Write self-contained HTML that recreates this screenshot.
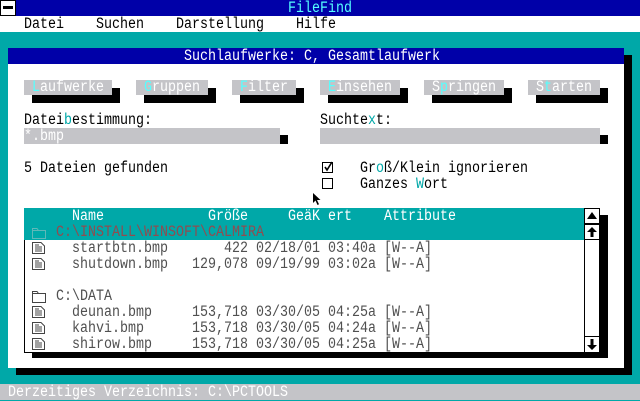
<!DOCTYPE html>
<html><head><meta charset="utf-8"><style>
*{margin:0;padding:0;box-sizing:border-box}
body{width:640px;height:400px;background:#00a8a8;position:relative;overflow:hidden;font-family:"Liberation Mono",monospace;font-size:15.5px;line-height:16px}
.a{position:absolute;white-space:pre;height:16px;transform-origin:0 0;transform:scaleX(0.86)}
.b{position:absolute}
.t{color:#00a8a8}
.c{color:#55ffff}
.k{color:#000}
.g{color:#505050}
</style></head><body>
<div class="b" style="left:0;top:0;width:640px;height:16px;background:#0000a8"></div>
<div class="b" style="left:0;top:0;width:16px;height:16px;background:#fff;border:1px solid #000"></div>
<div class="b" style="left:3px;top:6px;width:10px;height:3px;background:#000"></div>
<div class="a c" style="left:288px;top:0">FileFind</div>
<div class="b" style="left:0;top:16px;width:640px;height:16px;background:#fff"></div>
<div class="a k" style="left:24px;top:16px">Datei</div>
<div class="a k" style="left:96px;top:16px">Suchen</div>
<div class="a k" style="left:176px;top:16px">Darstellung</div>
<div class="a k" style="left:296px;top:16px">Hilfe</div>
<div class="b" style="left:16px;top:55px;width:616px;height:320px;background:#000"></div>
<div class="b" style="left:8px;top:48px;width:616px;height:320px;background:#fff"></div>
<div class="b" style="left:8px;top:48px;width:616px;height:16px;background:#0000a8"></div>
<div class="a" style="left:184px;top:48px;color:#fff">Suchlaufwerke: C, Gesamtlaufwerk</div>
<div class="b" style="left:32px;top:88px;width:88px;height:15px;background:#000"></div>
<div class="b" style="left:24px;top:80px;width:88px;height:15px;background:#c4c4c8"></div>
<div class="a" style="left:24px;top:79px;color:#fff"> <span class="c">L</span>aufwerke</div>
<div class="b" style="left:144px;top:88px;width:72px;height:15px;background:#000"></div>
<div class="b" style="left:136px;top:80px;width:72px;height:15px;background:#c4c4c8"></div>
<div class="a" style="left:136px;top:79px;color:#fff"> <span class="c">G</span>ruppen</div>
<div class="b" style="left:240px;top:88px;width:64px;height:15px;background:#000"></div>
<div class="b" style="left:232px;top:80px;width:64px;height:15px;background:#c4c4c8"></div>
<div class="a" style="left:232px;top:79px;color:#fff"> <span class="c">F</span>ilter</div>
<div class="b" style="left:328px;top:88px;width:80px;height:15px;background:#000"></div>
<div class="b" style="left:320px;top:80px;width:80px;height:15px;background:#c4c4c8"></div>
<div class="a" style="left:320px;top:79px;color:#fff"> <span class="c">E</span>insehen</div>
<div class="b" style="left:432px;top:88px;width:80px;height:15px;background:#000"></div>
<div class="b" style="left:424px;top:80px;width:80px;height:15px;background:#c4c4c8"></div>
<div class="a" style="left:424px;top:79px;color:#fff"> S<span class="c">p</span>ringen</div>
<div class="b" style="left:536px;top:88px;width:72px;height:15px;background:#000"></div>
<div class="b" style="left:528px;top:80px;width:72px;height:15px;background:#c4c4c8"></div>
<div class="a" style="left:528px;top:79px;color:#fff"> S<span class="c">t</span>arten</div>
<div class="a k" style="left:24px;top:112px">Datei<span class="t">b</span>estimmung:</div>
<div class="a k" style="left:320px;top:112px">Suchte<span class="t">x</span>t:</div>
<div class="b" style="left:280px;top:135px;width:8px;height:9px;background:#000"></div>
<div class="b" style="left:24px;top:128px;width:256px;height:16px;background:#c4c4c8"></div>
<div class="a" style="left:24px;top:128px;color:#fff">*.bmp</div>
<div class="b" style="left:600px;top:135px;width:8px;height:9px;background:#000"></div>
<div class="b" style="left:320px;top:128px;width:280px;height:16px;background:#c4c4c8"></div>
<div class="a k" style="left:24px;top:160px">5 Dateien gefunden</div>
<div class="b" style="left:322px;top:162px;width:11px;height:11px;border:1px solid #000"></div>
<svg class="b" style="left:322px;top:161px" width="12" height="12"><path d="M3 6 L5 9 L10 1" stroke="#000" stroke-width="1.6" fill="none"/></svg>
<div class="b" style="left:322px;top:178px;width:11px;height:11px;border:1px solid #000"></div>
<div class="a k" style="left:360px;top:160px">Gr<span class="t">o</span>ß/Klein ignorieren</div>
<div class="a k" style="left:360px;top:176px">Ganzes <span class="t">W</span>ort</div>
<svg class="b" style="left:312px;top:192px" width="10" height="14"><path d="M1 1 L1 11 L3.5 8.5 L5.5 13 L7 12.3 L5 8 L8.5 8 Z" fill="#000"/></svg>
<div class="b" style="left:32px;top:215px;width:576px;height:143px;background:#000"></div>
<div class="b" style="left:24px;top:208px;width:576px;height:145px;background:#fff;border-left:1px solid #000;border-bottom:1px solid #000"></div>
<div class="b" style="left:24px;top:208px;width:560px;height:32px;background:#00a8a8"></div>
<div class="a" style="left:72px;top:208px;color:#fff">Name</div>
<div class="a" style="left:208px;top:208px;color:#fff">Größe</div>
<div class="a" style="left:288px;top:208px;color:#fff">GeäK ert</div>
<div class="a" style="left:384px;top:208px;color:#fff">Attribute</div>
<svg class="b" style="left:32px;top:227px" width="14" height="12"><path d="M0.5 1.5 H5 L6.5 3.5 H13.5 V11.5 H0.5 Z M0.5 3.5 H6.5" stroke="#60b8b8" fill="none"/></svg>
<div class="a" style="left:56px;top:224px;color:#904c50">C:\INSTALL\WINSOFT\CALMIRA</div>
<div class="a g" style="left:72px;top:240px">startbtn.bmp       422 02/18/01 03:40a [W--A]</div>
<div class="a g" style="left:72px;top:256px">shutdown.bmp   129,078 09/19/99 03:02a [W--A]</div>
<svg class="b" style="left:32px;top:290px" width="14" height="13"><path d="M0.5 1.5 H5 L6.5 3.5 H13.5 V12.5 H0.5 Z M0.5 3.5 H6.5" stroke="#444" fill="none"/></svg>
<div class="a g" style="left:56px;top:288px">C:\DATA</div>
<div class="a g" style="left:72px;top:304px">deunan.bmp     153,718 03/30/05 04:25a [W--A]</div>
<div class="a g" style="left:72px;top:320px">kahvi.bmp      153,718 03/30/05 04:24a [W--A]</div>
<div class="a g" style="left:72px;top:336px">shirow.bmp     153,718 03/30/05 04:25a [W--A]</div>
<svg class="b" style="left:32px;top:242px" width="14" height="12"><path d="M0.5 0.5 H9 L12.5 4 V11.5 H0.5 Z M3 3 H7 M3 5 H10 M3 7 H10 M3 9 H10" stroke="#444" fill="none"/></svg>
<svg class="b" style="left:32px;top:258px" width="14" height="12"><path d="M0.5 0.5 H9 L12.5 4 V11.5 H0.5 Z M3 3 H7 M3 5 H10 M3 7 H10 M3 9 H10" stroke="#444" fill="none"/></svg>
<svg class="b" style="left:32px;top:306px" width="14" height="12"><path d="M0.5 0.5 H9 L12.5 4 V11.5 H0.5 Z M3 3 H7 M3 5 H10 M3 7 H10 M3 9 H10" stroke="#444" fill="none"/></svg>
<svg class="b" style="left:32px;top:322px" width="14" height="12"><path d="M0.5 0.5 H9 L12.5 4 V11.5 H0.5 Z M3 3 H7 M3 5 H10 M3 7 H10 M3 9 H10" stroke="#444" fill="none"/></svg>
<svg class="b" style="left:32px;top:338px" width="14" height="12"><path d="M0.5 0.5 H9 L12.5 4 V11.5 H0.5 Z M3 3 H7 M3 5 H10 M3 7 H10 M3 9 H10" stroke="#444" fill="none"/></svg>
<div class="b" style="left:584px;top:208px;width:16px;height:145px;background:#fff;border:1px solid #000"></div>
<svg class="b" style="left:584px;top:208px" width="16" height="145">
<rect x="0.5" y="0.5" width="15" height="15" fill="#fff" stroke="#000"/>
<path d="M3 11 L8 4 L13 11 Z" fill="#000"/>
<rect x="0.5" y="16.5" width="15" height="15" fill="#fff" stroke="#000"/>
<path d="M3 24 L8 19 L13 24 Z M6.5 24 H9.5 V29 H6.5 Z" fill="#000"/>
<rect x="0.5" y="128.5" width="15" height="16" fill="#fff" stroke="#000"/>
<path d="M3 137 L8 142 L13 137 Z M6.5 131 H9.5 V137 H6.5 Z" fill="#000"/>
</svg>
<div class="b" style="left:0;top:384px;width:640px;height:16px;background:#c4c4c8"></div>
<div class="a" style="left:8px;top:384px;color:#fff">Derzeitiges Verzeichnis: C:\PCTOOLS</div>
</body></html>
